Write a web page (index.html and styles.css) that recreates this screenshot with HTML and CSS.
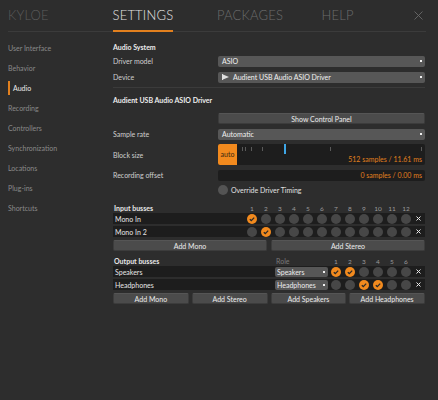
FILE: index.html
```html
<!DOCTYPE html>
<html>
<head>
<meta charset="utf-8">
<link rel="stylesheet" href="styles.css">
</head>
<body>
<div class="app">
  <header class="tabs">
    <div class="tab dim">KYLOE</div>
    <div class="tab active"><span class="tab-label">SETTINGS</span></div>
    <div class="tab">PACKAGES</div>
    <div class="tab last"><span>HELP</span>
      <svg class="close" width="9" height="9" viewBox="0 0 9 9"><path d="M0.5 0.5 L8.5 8.5 M8.5 0.5 L0.5 8.5" stroke="#6a6a6a" stroke-width="0.9"/></svg>
    </div>
  </header>
  <div class="main">
    <nav class="side">
      <div class="side-item">User Interface</div>
      <div class="side-item">Behavior</div>
      <div class="side-item current">Audio</div>
      <div class="side-item">Recording</div>
      <div class="side-item">Controllers</div>
      <div class="side-item">Synchronization</div>
      <div class="side-item">Locations</div>
      <div class="side-item">Plug-ins</div>
      <div class="side-item">Shortcuts</div>
    </nav>
    <section class="content">
      <div class="title t1">Audio System</div>
      <div class="row">
        <div class="label">Driver model</div>
        <div class="select">ASIO<i class="arrow"></i></div>
      </div>
      <div class="row">
        <div class="label">Device</div>
        <div class="select"><svg class="flag" width="7" height="6" viewBox="0 0 7 6"><path d="M0.5 0 V6" stroke="#e0e0e0" stroke-width="1"/><path d="M1 0.5 L7 3 L1 5.5 Z" fill="#e0e0e0"/></svg>Audient USB Audio ASIO Driver<i class="arrow"></i></div>
      </div>
      <div class="divider"></div>
      <div class="title t2">Audient USB Audio ASIO Driver</div>
      <div class="row">
        <div class="label"></div>
        <div class="button wide">Show Control Panel</div>
      </div>
      <div class="row">
        <div class="label">Sample rate</div>
        <div class="select">Automatic<i class="arrow"></i></div>
      </div>
      <div class="row block-row">
        <div class="label">Block size</div>
        <div class="slider">
          <div class="auto">auto</div>
          <div class="track">
            <i class="tick" style="left:5px"></i>
            <i class="tick" style="left:8px"></i>
            <i class="tick" style="left:14px"></i>
            <i class="tick" style="left:25px"></i>
            <i class="tick" style="left:93px"></i>
            <i class="tick" style="left:184px"></i>
            <i class="marker" style="left:47px"></i>
            <span class="readout">512 samples / 11.61 ms</span>
          </div>
        </div>
      </div>
      <div class="row offset-row">
        <div class="label">Recording offset</div>
        <div class="field"><span class="readout-inline">0 samples / 0.00 ms</span></div>
      </div>
      <div class="row radio-row">
        <div class="label"></div>
        <div class="radio-wrap"><span class="radio"></span>Override Driver Timing</div>
      </div>

      <div class="bus-head in-head">
        <div class="bus-title">Input busses</div>
        <div class="nums">
          <span>1</span><span>2</span><span>3</span><span>4</span><span>5</span><span>6</span><span>7</span><span>8</span><span>9</span><span>10</span><span>11</span><span>12</span>
        </div>
        <div class="xcell"></div>
      </div>
      <div class="bus">
        <div class="bus-name">Mono In</div>
        <div class="dots">
          <span class="dot on"><svg width="10" height="10" viewBox="0 0 10 10"><path d="M2.8 5.2 L4.3 6.6 L7.2 3.6" fill="none" stroke="#2a2a2a" stroke-width="1.3"/></svg></span><span class="dot"></span><span class="dot"></span><span class="dot"></span><span class="dot"></span><span class="dot"></span><span class="dot"></span><span class="dot"></span><span class="dot"></span><span class="dot"></span><span class="dot"></span><span class="dot"></span>
        </div>
        <div class="xcell"><svg width="5" height="5" viewBox="0 0 5 5"><path d="M0.5 0.5 L4.5 4.5 M4.5 0.5 L0.5 4.5" stroke="#e8e8e8" stroke-width="1"/></svg></div>
      </div>
      <div class="bus">
        <div class="bus-name">Mono In 2</div>
        <div class="dots">
          <span class="dot"></span><span class="dot on"><svg width="10" height="10" viewBox="0 0 10 10"><path d="M2.8 5.2 L4.3 6.6 L7.2 3.6" fill="none" stroke="#2a2a2a" stroke-width="1.3"/></svg></span><span class="dot"></span><span class="dot"></span><span class="dot"></span><span class="dot"></span><span class="dot"></span><span class="dot"></span><span class="dot"></span><span class="dot"></span><span class="dot"></span><span class="dot"></span>
        </div>
        <div class="xcell"><svg width="5" height="5" viewBox="0 0 5 5"><path d="M0.5 0.5 L4.5 4.5 M4.5 0.5 L0.5 4.5" stroke="#e8e8e8" stroke-width="1"/></svg></div>
      </div>
      <div class="btns two">
        <div class="button">Add Mono</div>
        <div class="button">Add Stereo</div>
      </div>

      <div class="bus-head out-head">
        <div class="bus-title">Output busses</div>
        <div class="role-head">Role</div>
        <div class="nums">
          <span>1</span><span>2</span><span>3</span><span>4</span><span>5</span><span>6</span>
        </div>
        <div class="xcell"></div>
      </div>
      <div class="bus">
        <div class="bus-name">Speakers</div>
        <div class="role">Speakers<i class="arrow"></i></div>
        <div class="dots">
          <span class="dot on"><svg width="10" height="10" viewBox="0 0 10 10"><path d="M2.8 5.2 L4.3 6.6 L7.2 3.6" fill="none" stroke="#2a2a2a" stroke-width="1.3"/></svg></span><span class="dot on"><svg width="10" height="10" viewBox="0 0 10 10"><path d="M2.8 5.2 L4.3 6.6 L7.2 3.6" fill="none" stroke="#2a2a2a" stroke-width="1.3"/></svg></span><span class="dot"></span><span class="dot"></span><span class="dot"></span><span class="dot"></span>
        </div>
        <div class="xcell"><svg width="5" height="5" viewBox="0 0 5 5"><path d="M0.5 0.5 L4.5 4.5 M4.5 0.5 L0.5 4.5" stroke="#e8e8e8" stroke-width="1"/></svg></div>
      </div>
      <div class="bus">
        <div class="bus-name">Headphones</div>
        <div class="role">Headphones<i class="arrow"></i></div>
        <div class="dots">
          <span class="dot"></span><span class="dot"></span><span class="dot on"><svg width="10" height="10" viewBox="0 0 10 10"><path d="M2.8 5.2 L4.3 6.6 L7.2 3.6" fill="none" stroke="#2a2a2a" stroke-width="1.3"/></svg></span><span class="dot on"><svg width="10" height="10" viewBox="0 0 10 10"><path d="M2.8 5.2 L4.3 6.6 L7.2 3.6" fill="none" stroke="#2a2a2a" stroke-width="1.3"/></svg></span><span class="dot"></span><span class="dot"></span>
        </div>
        <div class="xcell"><svg width="5" height="5" viewBox="0 0 5 5"><path d="M0.5 0.5 L4.5 4.5 M4.5 0.5 L0.5 4.5" stroke="#e8e8e8" stroke-width="1"/></svg></div>
      </div>
      <div class="btns four">
        <div class="button">Add Mono</div>
        <div class="button">Add Stereo</div>
        <div class="button">Add Speakers</div>
        <div class="button">Add Headphones</div>
      </div>
    </section>
  </div>
</div>
</body>
</html>
```
FILE: styles.css
```css
* { box-sizing: border-box; }
html, body { margin: 0; padding: 0; }
body {
  background: #2d2d2d;
  width: 438px;
  height: 400px;
  overflow: hidden;
  font-family: "Lato", "DejaVu Sans", sans-serif;
  font-size: 7px;
  color: #d2d2d2;
}
.app { width: 438px; height: 400px; }

.tabs {
  display: flex;
  height: 32px;
  margin: 0 12px 0 8px;
  border-bottom: 1px solid #3b3b3b;
  font-weight: 300;
  font-size: 13px;
  letter-spacing: 0.2px;
}
.tab {
  width: 104.5px;
  line-height: 30px;
  color: #6c6c6c;
}
.tab.dim { color: #5c5c5c; }
.tab.active { color: #e4e4e4; }
.tab-label {
  display: inline-block;
  height: 32px;
  border-bottom: 2px solid #e2801e;
}
.tab.last {
  flex: 1;
  display: flex;
  align-items: center;
  justify-content: space-between;
  height: 30px;
}
.close { margin-right: 3px; }

.main { display: flex; }
.side {
  width: 113px;
  padding: 6px 0 0 8px;
}
.side-item {
  height: 20px;
  line-height: 20px;
  color: #8a8a8a;
}
.side-item.current {
  color: #ececec;
  padding-left: 5px;
  position: relative;
}
.side-item.current::before {
  content: "";
  position: absolute;
  left: 0;
  top: 3px;
  width: 2px;
  height: 14px;
  background: #e2801e;
}

.content {
  width: 312px;
  padding-top: 10px;
  display: flex;
  flex-direction: column;
}
.title {
  font-weight: 700;
  color: #ececec;
  line-height: 12px;
  height: 12px;
}
.t1 { height: 11px; line-height: 11px; }
.t2 { margin-top: 6px; margin-bottom: 4px; }

.row {
  display: flex;
  align-items: center;
  height: 16px;
}
.label {
  width: 105px;
  color: #d0d0d0;
}
.select {
  flex: 1;
  height: 11px;
  background: #575757;
  border-radius: 2px;
  color: #f0f0f0;
  padding: 0 4px;
  line-height: 11px;
  display: flex;
  align-items: center;
  position: relative;
}
.flag { margin-right: 4px; }
.arrow {
  position: absolute;
  right: 3px;
  top: 4.5px;
  width: 2px;
  height: 2px;
  background: #f0f0f0;
}
.divider {
  height: 1px;
  background: #3b3b3b;
  margin-top: 2px;
}
.button {
  height: 11px;
  line-height: 10px;
  text-align: center;
  background: #4b4b4b;
  border: 1px solid #3c3c3c;
  border-top-color: #555;
  border-radius: 2px;
  color: #ececec;
}
.button.wide { flex: 1; }

.block-row { height: 21px; margin-top: 2px; }
.slider {
  flex: 1;
  height: 21px;
  display: flex;
  background: #1d1d1d;
  border-radius: 2px;
  overflow: hidden;
}
.auto {
  width: 19px;
  background: #f28a1e;
  color: #3a2610;
  text-align: center;
  line-height: 21px;
}
.track { flex: 1; position: relative; }
.tick {
  position: absolute;
  top: 3px;
  width: 1px;
  height: 4px;
  background: #5a5a5a;
}
.marker {
  position: absolute;
  top: 0;
  width: 2px;
  height: 10px;
  background: #3ea6e6;
}
.readout {
  position: absolute;
  right: 3px;
  bottom: 1px;
  color: #e2801e;
  line-height: 9px;
}
.offset-row { margin-top: 2px; }
.field {
  flex: 1;
  height: 11px;
  background: #1d1d1d;
  border-radius: 2px;
  text-align: right;
  padding-right: 3px;
  line-height: 11px;
}
.readout-inline { color: #e2801e; }
.radio-row { height: 14px; }
.radio-wrap { display: flex; align-items: center; color: #e0e0e0; }
.radio {
  width: 10px;
  height: 10px;
  border-radius: 50%;
  background: #545454;
  margin-right: 3px;
}

.bus-head {
  display: flex;
  align-items: center;
  height: 10px;
}
.in-head { margin-top: 6px; }
.out-head { margin-top: 5px; }
.bus-title { flex: 1; font-weight: 700; color: #e6e6e6; padding-left: 1px; }
.nums { display: flex; gap: 4px; }
.nums span {
  width: 10px;
  text-align: center;
  color: #9a9a9a;
  font-size: 6.5px;
}
.xcell {
  width: 14px;
  display: flex;
  justify-content: center;
  align-items: center;
}
.role-head {
  width: 56px;
  color: #7a7a7a;
  padding-left: 1px;
}
.bus {
  display: flex;
  align-items: center;
  height: 11px;
  background: #1d1d1d;
  margin-bottom: 2px;
}
.bus-name { flex: 1; padding-left: 2px; color: #e6e6e6; }
.dots { display: flex; gap: 4px; }
.dot {
  width: 10px;
  height: 10px;
  border-radius: 50%;
  background: #474747;
  display: block;
}
.dot.on { background: #f28a1e; }
.dot svg { display: block; }
.role {
  width: 53px;
  margin-right: 3px;
  height: 10px;
  line-height: 10px;
  background: #575757;
  border-radius: 2px;
  padding-left: 2px;
  color: #ececec;
  position: relative;
}
.role .arrow { top: 4px; }
.btns { display: grid; margin-top: 1px; }
.btns.two { grid-template-columns: 1fr 1fr; gap: 4px; }
.btns.four { grid-template-columns: repeat(4, 1fr); gap: 3px; }
```
